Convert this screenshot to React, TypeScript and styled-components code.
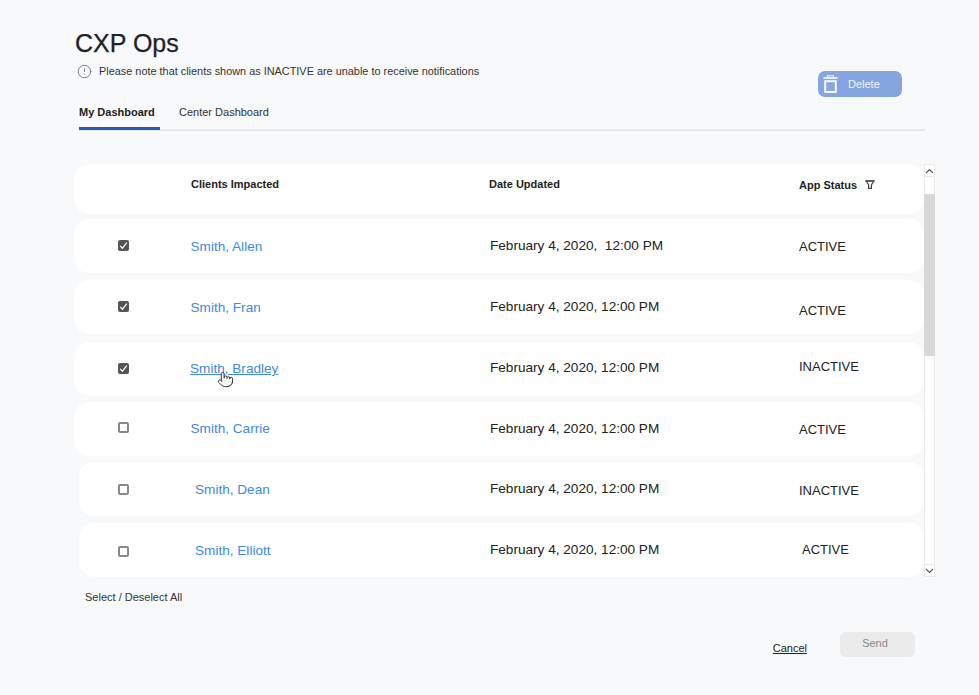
import React from "react";
import styled, { createGlobalStyle } from "styled-components";
import { CircleAlert, Pointer } from "lucide-react";

interface IClient {
  name: string;
  date: string;
  status: string;
  checked: boolean;
  inset?: boolean;
  gap: number;
  statusLeft?: number;
  offsets: [number, number, number, number];
  hover?: boolean;
}

const clients: IClient[] = [
  { name: "Smith, Allen", date: "February 4, 2020,  12:00 PM", status: "ACTIVE", checked: true, gap: 5, offsets: [20.5, 20, 19, 20] },
  { name: "Smith, Fran", date: "February 4, 2020, 12:00 PM", status: "ACTIVE", checked: true, gap: 7, offsets: [20.5, 20, 19, 23] },
  { name: "Smith, Bradley", date: "February 4, 2020, 12:00 PM", status: "INACTIVE", checked: true, gap: 8, offsets: [20.5, 19, 18, 17] , hover: true },
  { name: "Smith, Carrie", date: "February 4, 2020, 12:00 PM", status: "ACTIVE", checked: false, gap: 6, offsets: [19.5, 19, 19, 20] },
  { name: "Smith, Dean", date: "February 4, 2020, 12:00 PM", status: "INACTIVE", checked: false, inset: true, gap: 6, offsets: [21.5, 20, 19, 21] },
  { name: "Smith, Elliott", date: "February 4, 2020, 12:00 PM", status: "ACTIVE", checked: false, inset: true, gap: 7, statusLeft: 3, offsets: [22.5, 19.5, 19, 19] },
];

const GlobalStyle = createGlobalStyle`
  html, body {
    margin: 0;
    background: #f8f9fb;
  }
  body {
    font-family: "Liberation Sans", Arial, sans-serif;
    color: #222;
  }
`;

const Page = styled.main`
  box-sizing: border-box;
  width: 979px;
  height: 695px;
  padding: 28px 44px 0 74px;
  overflow: hidden;
`;

const Title = styled.h1`
  margin: 0 0 0 1px;
  font-size: 25px;
  line-height: 31px;
  font-weight: 400;
  color: #222;
  -webkit-text-stroke: 0.25px #222;
`;

const Note = styled.div`
  display: flex;
  align-items: center;
  gap: 7px;
  margin: 4px 0 0 3px;
  height: 16px;
  font-size: 10.9px;
  color: #333;
  svg {
    color: #555;
  }
`;

const TopBar = styled.div`
  display: flex;
  align-items: flex-end;
  justify-content: space-between;
  margin-left: 5px;
  margin-right: 10px;
  height: 50px;
  border-bottom: 2px solid #e4e6ea;
`;

const Tabs = styled.nav`
  display: flex;
  height: 100%;
  align-items: flex-end;
`;

const Tab = styled.div<{ $active?: boolean }>`
  box-sizing: border-box;
  width: ${(p) => (p.$active ? "81px" : "auto")};
  height: 25px;
  margin-bottom: -1px;
  margin-right: ${(p) => (p.$active ? "19px" : "0")};
  font-size: 11px;
  line-height: 14px;
  font-weight: ${(p) => (p.$active ? 700 : 400)};
  color: ${(p) => (p.$active ? "#222" : "#333")};
  border-bottom: 3px solid ${(p) => (p.$active ? "#2a5da8" : "transparent")};
`;

const DeleteButton = styled.button`
  display: flex;
  align-items: center;
  gap: 10px;
  box-sizing: border-box;
  width: 84px;
  height: 26px;
  margin: 0 23px 32px 0;
  padding: 0 0 0 5px;
  border: none;
  border-radius: 7px;
  background: #85a5e0;
  color: #f2f5fc;
  font-family: inherit;
  font-size: 11px;
`;

const TableArea = styled.section`
  display: flex;
  margin-top: 33px;
  height: 413px;
`;

const Rows = styled.div`
  width: 850px;
  display: flex;
  flex-direction: column;
`;

const HeaderRow = styled.div`
  display: grid;
  grid-template-columns: 117px 298px 310px 1fr;
  height: 50px;
  flex-shrink: 0;
  border-radius: 15px;
  background: #fff;
  font-size: 11px;
  font-weight: 700;
  color: #222;
`;

const HeaderCell = styled.div<{ $top: number }>`
  display: flex;
  align-items: flex-start;
  gap: 8px;
  padding-top: ${(p) => p.$top}px;
  line-height: 14px;
  svg {
    margin-top: 2px;
  }
`;

const Row = styled.div<{ $inset?: boolean; $gap: number }>`
  display: grid;
  grid-template-columns: ${(p) => (p.$inset ? "116px 295px" : "116.5px 299.5px")} 309px 1fr;
  box-sizing: border-box;
  height: 54px;
  flex-shrink: 0;
  margin-top: ${(p) => p.$gap}px;
  margin-left: ${(p) => (p.$inset ? "5px" : "0")};
  border-radius: 15px;
  background: #fff;
`;

const CheckCell = styled.div<{ $top: number; $inset?: boolean }>`
  padding: ${(p) => p.$top}px 0 0 ${(p) => (p.$inset ? "38.5px" : "43.5px")};
`;

const CheckMark = styled.span<{ $checked: boolean }>`
  display: flex;
  align-items: center;
  justify-content: center;
  box-sizing: border-box;
  width: 11px;
  height: 11px;
  border-radius: 2px;
  background: ${(p) => (p.$checked ? "#555" : "#fff")};
  border: ${(p) => (p.$checked ? "none" : "2px solid #888")};
`;

const Cell = styled.div<{ $top: number }>`
  padding-top: ${(p) => p.$top}px;
  font-size: 13.6px;
  line-height: 15px;
  color: #222;
  white-space: pre;
`;

const StatusCell = styled(Cell)<{ $left?: number }>`
  padding-left: ${(p) => p.$left ?? 0}px;
  font-size: 13px;
`;

const NameLink = styled.a<{ $hover?: boolean }>`
  position: relative;
  display: inline-block;
  color: #4288dc;
  text-decoration: ${(p) => (p.$hover ? "underline" : "none")};
  margin-left: ${(p) => (p.$hover ? "-0.5px" : "0")};
`;

const HandCursor = styled.span`
  position: absolute;
  left: 27px;
  top: 10px;
  display: flex;
  color: #222;
  svg {
    fill: #fff;
  }
`;

const ScrollTrack = styled.div`
  position: relative;
  box-sizing: border-box;
  width: 11px;
  background: #fff;
  border: 1px solid #e9e9e9;
  display: flex;
  flex-direction: column;
  justify-content: space-between;
`;

const ScrollArrow = styled.div<{ $up?: boolean }>`
  display: flex;
  align-items: center;
  justify-content: center;
  height: 11px;
  background: #fff;
  border-${(p) => (p.$up ? "bottom" : "top")}: 1px solid #e9e9e9;
`;

const ScrollThumb = styled.div`
  position: absolute;
  left: -1px;
  right: -1px;
  top: 29px;
  height: 162px;
  background: #d8d8d8;
`;

const SelectAll = styled.div`
  margin: 14px 0 0 11px;
  font-size: 11px;
  line-height: 13px;
  color: #333;
`;

const Footer = styled.footer`
  display: flex;
  justify-content: flex-end;
  align-items: flex-start;
  gap: 33px;
  margin: 28px 20px 0 0;
`;

const CancelLink = styled.a`
  margin-top: 9px;
  font-size: 11px;
  line-height: 14px;
  color: #222;
  text-decoration: underline;
`;

const SendButton = styled.button`
  width: 75px;
  height: 25px;
  padding: 0 5px 4px 0;
  border: none;
  border-radius: 6px;
  background: #ebebeb;
  color: #888;
  font-family: inherit;
  font-size: 11px;
`;

const TrashIcon = () => (
  <svg width="15" height="18" viewBox="0 0 15 18" fill="none" stroke="#f7f9fe">
    <path d="M.5 3h14" strokeWidth="1.7" />
    <path d="M4.5 2.5V.8h6v1.7" strokeWidth="1.1" />
    <rect x="2.2" y="6.2" width="10.6" height="10.8" strokeWidth="2" />
  </svg>
);

const FilterIcon = () => (
  <svg width="10" height="9" viewBox="0 0 10 9" fill="none" stroke="#444">
    <path d="M.3 1h9.4" strokeWidth="1.7" />
    <path d="M1.6 1.5 3.6 5v3.4h2.8V5l2-3.5" strokeWidth="1.2" />
  </svg>
);

const Chevron = ({ up }: { up?: boolean }) => (
  <svg width="9" height="6" viewBox="0 0 9 6" fill="none" stroke="#555" strokeWidth="1.1">
    <path d={up ? "M1 5l3.5-3.5L8 5" : "M1 1l3.5 3.5L8 1"} />
  </svg>
);

const Check = () => (
  <svg width="9" height="9" viewBox="0 0 9 9" fill="none" stroke="#fff" strokeWidth="1.2">
    <path d="M1.2 4.8l2.2 2.4 4.4-5.6" />
  </svg>
);

export default function App() {
  return (
    <Page>
      <GlobalStyle />
      <Title>CXP Ops</Title>
      <Note>
        <CircleAlert size={15} strokeWidth={1.2} />
        Please note that clients shown as INACTIVE are unable to receive notifications
      </Note>
      <TopBar>
        <Tabs>
          <Tab $active>My Dashboard</Tab>
          <Tab>Center Dashboard</Tab>
        </Tabs>
        <DeleteButton>
          <TrashIcon />
          Delete
        </DeleteButton>
      </TopBar>
      <TableArea>
        <Rows>
          <HeaderRow>
            <div />
            <HeaderCell $top={13}>Clients Impacted</HeaderCell>
            <HeaderCell $top={13}>Date Updated</HeaderCell>
            <HeaderCell $top={14}>
              App Status
              <FilterIcon />
            </HeaderCell>
          </HeaderRow>
          {clients.map((client) => (
            <Row key={client.name} $inset={client.inset} $gap={client.gap}>
              <CheckCell $top={client.offsets[0]} $inset={client.inset}>
                <CheckMark $checked={client.checked}>{client.checked && <Check />}</CheckMark>
              </CheckCell>
              <Cell $top={client.offsets[1]}>
                <NameLink $hover={client.hover}>
                  {client.name}
                  {client.hover && (
                    <HandCursor>
                      <Pointer size={17} strokeWidth={1.3} />
                    </HandCursor>
                  )}
                </NameLink>
              </Cell>
              <Cell $top={client.offsets[2]}>{client.date}</Cell>
              <StatusCell $top={client.offsets[3]} $left={client.statusLeft}>
                {client.status}
              </StatusCell>
            </Row>
          ))}
        </Rows>
        <ScrollTrack>
          <ScrollThumb />
          <ScrollArrow $up>
            <Chevron up />
          </ScrollArrow>
          <ScrollArrow>
            <Chevron />
          </ScrollArrow>
        </ScrollTrack>
      </TableArea>
      <SelectAll>Select / Deselect All</SelectAll>
      <Footer>
        <CancelLink>Cancel</CancelLink>
        <SendButton>Send</SendButton>
      </Footer>
    </Page>
  );
}
